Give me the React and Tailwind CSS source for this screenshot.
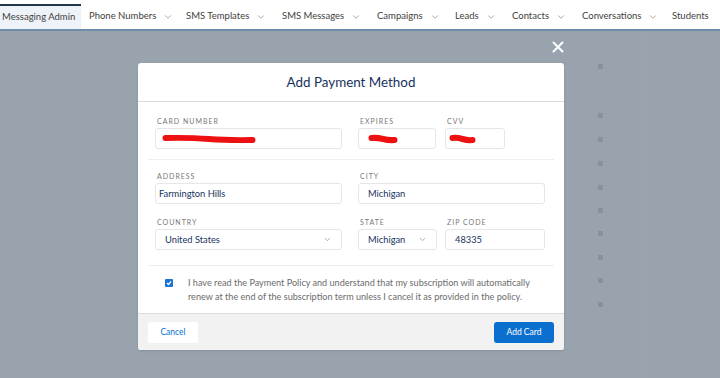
import { ChevronDown } from 'lucide-react'

const navItems = [
  { label: 'Phone Numbers', w: 'w-[97px]' },
  { label: 'SMS Templates', w: 'w-[96px]' },
  { label: 'SMS Messages', w: 'w-[95px]' },
  { label: 'Campaigns', w: 'w-[78px]' },
  { label: 'Leads', w: 'w-[57px]' },
  { label: 'Contacts', w: 'w-[70px]' },
  { label: 'Conversations', w: 'w-[90px]' },
]

const dotRows = [66, 115, 139, 163, 187, 210, 233, 257, 280, 304]

function Label({ children }) {
  return (
    <div className="text-[7px] leading-[8px] tracking-[1px] uppercase text-[#7a7875] mb-[3px] pl-[2px]">
      {children}
    </div>
  )
}

function Input({ children, className = '' }) {
  return (
    <div
      className={`h-[21px] border border-[#e6e6e6] rounded-[3px] bg-white flex items-center px-[9px] text-[9.3px] text-[#16325c] ${className}`}
    >
      {children}
    </div>
  )
}

function Redacted({ w }) {
  return (
    <svg width={w} height="10" viewBox={`0 0 ${w} 10`} className="block">
      <path
        d={`M3.5 4 Q ${w * 0.3} 3.5 ${w * 0.5} 5 T ${w - 3.5} 6`}
        stroke="#ee1111"
        strokeWidth="6"
        strokeLinecap="round"
        fill="none"
      />
    </svg>
  )
}

export default function App() {
  return (
    <div className="relative w-[720px] h-[378px] overflow-hidden bg-[#98a3ae]" style={{ fontFamily: 'Lato, "Open Sans", sans-serif' }}>
      {/* Top navigation */}
      <nav className="h-[31px] bg-white border-b-[2px] border-[#6f8dab] flex items-stretch pt-[4px]">
        <div className="w-[81px] bg-[#eef3f9] border-t-[2px] border-[#22384f] flex items-center pl-[2px] text-[9.5px] text-[#3e3e3c] whitespace-nowrap">
          Messaging Admin
        </div>
        <div className="flex items-center pl-[8px] text-[9.5px] text-[#3e3e3c]">
          {navItems.map((item) => (
            <div key={item.label} className={`${item.w} flex items-center gap-[7px] whitespace-nowrap`}>
              <span>{item.label}</span>
              <ChevronDown size={10} strokeWidth={1.5} className="text-[#706e6b]" />
            </div>
          ))}
          <div className="whitespace-nowrap">Students</div>
        </div>
      </nav>

      {/* Page content behind the backdrop */}
      {dotRows.map((y) => (
        <div key={y} className="absolute left-[598px] w-[5px] h-[5px] bg-[#87909b] rounded-[1px]" style={{ top: y - 2 }} />
      ))}
      <div className="absolute left-[647px] top-[33px] bottom-0 w-px bg-[#9ba5b0]" />

      {/* Close */}
      <svg className="absolute left-[552px] top-[41px]" width="12" height="12" viewBox="0 0 12 12">
        <path d="M1.5 1.5 L10.5 10.5 M10.5 1.5 L1.5 10.5" stroke="white" strokeWidth="2" strokeLinecap="round" />
      </svg>

      {/* Modal */}
      <div className="absolute left-[138px] top-[63px] w-[426px] h-[287px] bg-white rounded-[3px] flex flex-col overflow-hidden shadow-sm">
        <div className="h-[39px] flex items-center justify-center border-b border-[#dddbda] text-[13.4px] text-[#16325c]">
          Add Payment Method
        </div>

        <div className="flex-1 px-[10px] pt-[15px]">
          <div className="flex px-[7px] pb-[10px] border-b border-[#eeeeee]">
            <div className="w-[187px]">
              <Label>Card Number</Label>
              <Input className="pl-[6px]">
                <Redacted w={94} />
              </Input>
            </div>
            <div className="w-[78px] ml-[16px]">
              <Label>Expires</Label>
              <Input>
                <Redacted w={30} />
              </Input>
            </div>
            <div className="w-[60px] ml-[9px]">
              <Label>CVV</Label>
              <Input className="pl-[3px]">
                <Redacted w={27} />
              </Input>
            </div>
          </div>

          <div className="px-[7px] pt-[12px] pb-[15px] border-b border-[#eeeeee] flex flex-col gap-[14px]">
            <div className="flex">
              <div className="w-[187px]">
                <Label>Address</Label>
                <Input className="pl-[3px]">Farmington Hills</Input>
              </div>
              <div className="w-[187px] ml-[16px]">
                <Label>City</Label>
                <Input>Michigan</Input>
              </div>
            </div>
            <div className="flex">
              <div className="w-[187px]">
                <Label>Country</Label>
                <Input className="justify-between">
                  <span>United States</span>
                  <ChevronDown size={9} strokeWidth={1.5} className="text-[#706e6b]" />
                </Input>
              </div>
              <div className="w-[79px] ml-[16px]">
                <Label>State</Label>
                <Input className="justify-between">
                  <span>Michigan</span>
                  <ChevronDown size={9} strokeWidth={1.5} className="text-[#706e6b]" />
                </Input>
              </div>
              <div className="w-[100px] ml-[8px]">
                <Label>Zip Code</Label>
                <Input>48335</Input>
              </div>
            </div>
          </div>

          <div className="flex pt-[10px] pl-[17px]">
            <div className="w-[8px] h-[8px] mt-[3px] rounded-[1px] bg-[#1a73d6] flex items-center justify-center">
              <svg width="6" height="6" viewBox="0 0 6 6">
                <path d="M1 3 L2.5 4.5 L5 1.5" stroke="white" strokeWidth="1.2" fill="none" />
              </svg>
            </div>
            <p className="ml-[15px] text-[9.1px] leading-[14px] text-[#6b6b6b] whitespace-nowrap">
              I have read the Payment Policy and understand that my subscription will automatically
              <br />
              renew at the end of the subscription term unless I cancel it as provided in the policy.
            </p>
          </div>
        </div>

        <div className="h-[37px] bg-[#f3f2f2] border-t border-[#dddbda] flex items-center justify-between px-[10px]">
          <button className="h-[21px] w-[50px] bg-white rounded-[3px] text-[8.5px] text-[#0070d2]">Cancel</button>
          <button className="h-[21px] w-[60px] bg-[#0b6fd0] rounded-[3px] text-[8.5px] text-white">Add Card</button>
        </div>
      </div>
    </div>
  )
}
